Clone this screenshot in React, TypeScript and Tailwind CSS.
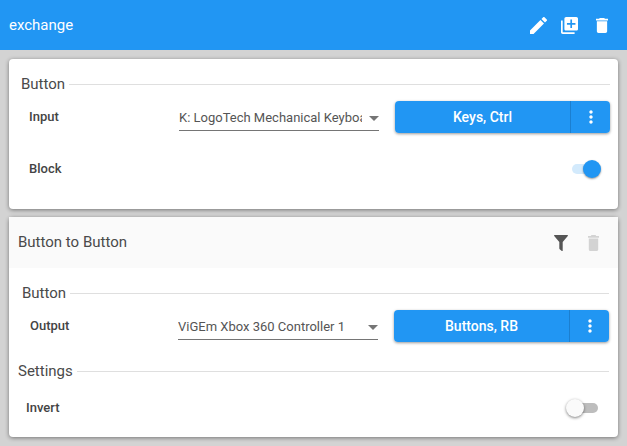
const Edit = () => (
  <svg viewBox="3 3 18 18" width="17" height="17" fill="currentColor">
    <path d="M3 17.25V21h3.750L17.810 9.940l-3.750-3.750L3 17.250zM20.710 7.040a1 1 0 0 0 0-1.410l-2.340-2.340a1 1 0 0 0-1.410 0l-1.830 1.830 3.750 3.750 1.830-1.830z" />
  </svg>
);

const LibraryAdd = () => (
  <svg viewBox="2 2 20 20" width="17" height="17" fill="currentColor">
    <path d="M4 6H2v14c0 1.100.9 2 2 2h14v-2H4V6zm16-4H8c-1.100 0-2 .9-2 2v12c0 1.100.9 2 2 2h12c1.100 0 2-.9 2-2V4c0-1.100-.9-2-2-2zm-1 9h-4v4h-2v-4H9V9h4V5h2v4h4v2z" />
  </svg>
);

const Trash = ({ w, h }: { w: number; h: number }) => (
  <svg viewBox="5 3 14 18" width={w} height={h} preserveAspectRatio="none" fill="currentColor">
    <path d="M6 19c0 1.100.9 2 2 2h8c1.100 0 2-.9 2-2V7H6v12zM19 4h-3.500l-1-1h-5l-1 1H5v2h14V4z" />
  </svg>
);

const Filter = () => (
  <svg viewBox="0 0 14 16" width="14" height="16" fill="currentColor">
    <path d="M.6 0h12.800c.5 0 .8.6.4 1L8.700 7v8.400c0 .5-.5.8-.9.5L5.700 14.200c-.2-.1-.4-.4-.4-.6V7L.2 1C-.2.6.1 0 .6 0z" />
  </svg>
);

const Dots = () => (
  <svg viewBox="0 0 24 24" width="20" height="20" fill="currentColor">
    <path d="M12 8c1.100 0 2-.9 2-2s-.9-2-2-2-2 .9-2 2 .9 2 2 2zm0 2c-1.100 0-2 .9-2 2s.9 2 2 2 2-.9 2-2-.9-2-2-2zm0 6c-1.100 0-2 .9-2 2s.9 2 2 2 2-.9 2-2-.9-2-2-2z" />
  </svg>
);

const Section = ({ title, className }: { title: string; className: string }) => (
  <div className={`flex items-center gap-1 ${className}`}>
    <span className="text-[15px] leading-5 text-[#4a4a4a]">{title}</span>
    <div className="h-px flex-1 bg-[#dfdfdf]" />
  </div>
);

const Picker = ({ label, value, keys, labelWidth }: { label: string; value: string; keys: string; labelWidth: string }) => (
  <div className="flex h-8 items-center">
    <div className={`${labelWidth} pl-2 text-[13px] font-medium text-[#444]`}>{label}</div>
    <div className="relative flex h-[30px] w-[200px] items-center self-start border-b border-[#757575] pt-1">
      <span className="w-[183px] overflow-hidden text-[13px] whitespace-nowrap text-[#555]">{value}</span>
      <div className="absolute top-[15px] right-0 h-0 w-0 border-x-[5px] border-t-[5px] border-x-transparent border-t-[#757575]" />
    </div>
    <div className="ml-4 flex h-8 flex-1 rounded text-white shadow-[0_1px_3px_rgba(0,0,0,0.4)]">
      <div className="flex flex-1 items-center justify-center rounded-l bg-[#2196f3] text-sm font-medium">{keys}</div>
      <div className="flex w-10 items-center justify-center rounded-r border-l border-[#1b7fd0] bg-[#2196f3]">
        <Dots />
      </div>
    </div>
  </div>
);

export default function App() {
  return (
    <div className="h-[446px] w-[627px] overflow-hidden bg-[#d3d3d3] font-['Roboto',sans-serif]">
      <header className="flex h-[50px] items-center justify-between bg-[#2196f3] pr-[19px] pl-[9px] text-white">
        <span className="text-[15px]">exchange</span>
        <div className="flex items-center">
          <Edit />
          <div className="ml-[14px]">
            <LibraryAdd />
          </div>
          <div className="ml-[18px]">
            <Trash w={12} h={15} />
          </div>
        </div>
      </header>

      <section className="mx-[9px] mt-[9px] h-[150px] rounded-sm bg-white pt-[15px] pr-2 pl-3 shadow-[0_1px_4px_rgba(0,0,0,0.45)]">
        <Section title="Button" className="" />
        <div className="mt-[7px]">
          <Picker label="Input" value="K: LogoTech Mechanical Keyboard" keys="Keys, Ctrl" labelWidth="w-[158px]" />
        </div>
        <div className="mt-[20px] flex h-8 items-center justify-between pl-2">
          <span className="text-[13px] font-medium text-[#444]">Block</span>
          <div className="relative mr-[10px] h-[10px] w-7 rounded-full bg-[#d3eafc]">
            <div className="absolute top-[-4px] right-[-1px] h-[18px] w-[18px] rounded-full bg-[#2196f3] shadow-[0_1px_2px_rgba(0,0,0,0.4)]" />
          </div>
        </div>
      </section>

      <section className="mx-[9px] mt-[8px] h-[220px] rounded-sm bg-white shadow-[0_1px_4px_rgba(0,0,0,0.45)]">
        <div className="flex h-[51px] items-center justify-between bg-[#fafafa] pr-[19px] pl-[9px]">
          <span className="text-[15px] text-[#4a4a4a]">Button to Button</span>
          <div className="flex items-center gap-5 text-[#d3d3d3]">
            <span className="text-[#555]"><Filter /></span>
            <Trash w={11} h={16} />
          </div>
        </div>
        <div className="pr-[9px] pl-[13px]">
          <Section title="Button" className="mt-[15px]" />
          <div className="mt-[7px]">
            <Picker label="Output" value="ViGEm Xbox 360 Controller 1" keys="Buttons, RB" labelWidth="w-[156px]" />
          </div>
        </div>
        <div className="pr-[9px] pl-[9px]">
          <Section title="Settings" className="mt-[19px]" />
          <div className="mt-[11px] flex h-8 items-center justify-between pl-2">
            <span className="text-[13px] font-medium text-[#444]">Invert</span>
            <div className="relative mr-[11px] h-[10px] w-[30px] rounded-full bg-[#bdbdbd]">
              <div className="absolute top-[-4px] left-[-2px] h-[18px] w-[18px] rounded-full bg-[#fafafa] shadow-[0_1px_3px_rgba(0,0,0,0.5)]" />
            </div>
          </div>
        </div>
      </section>
    </div>
  );
}
